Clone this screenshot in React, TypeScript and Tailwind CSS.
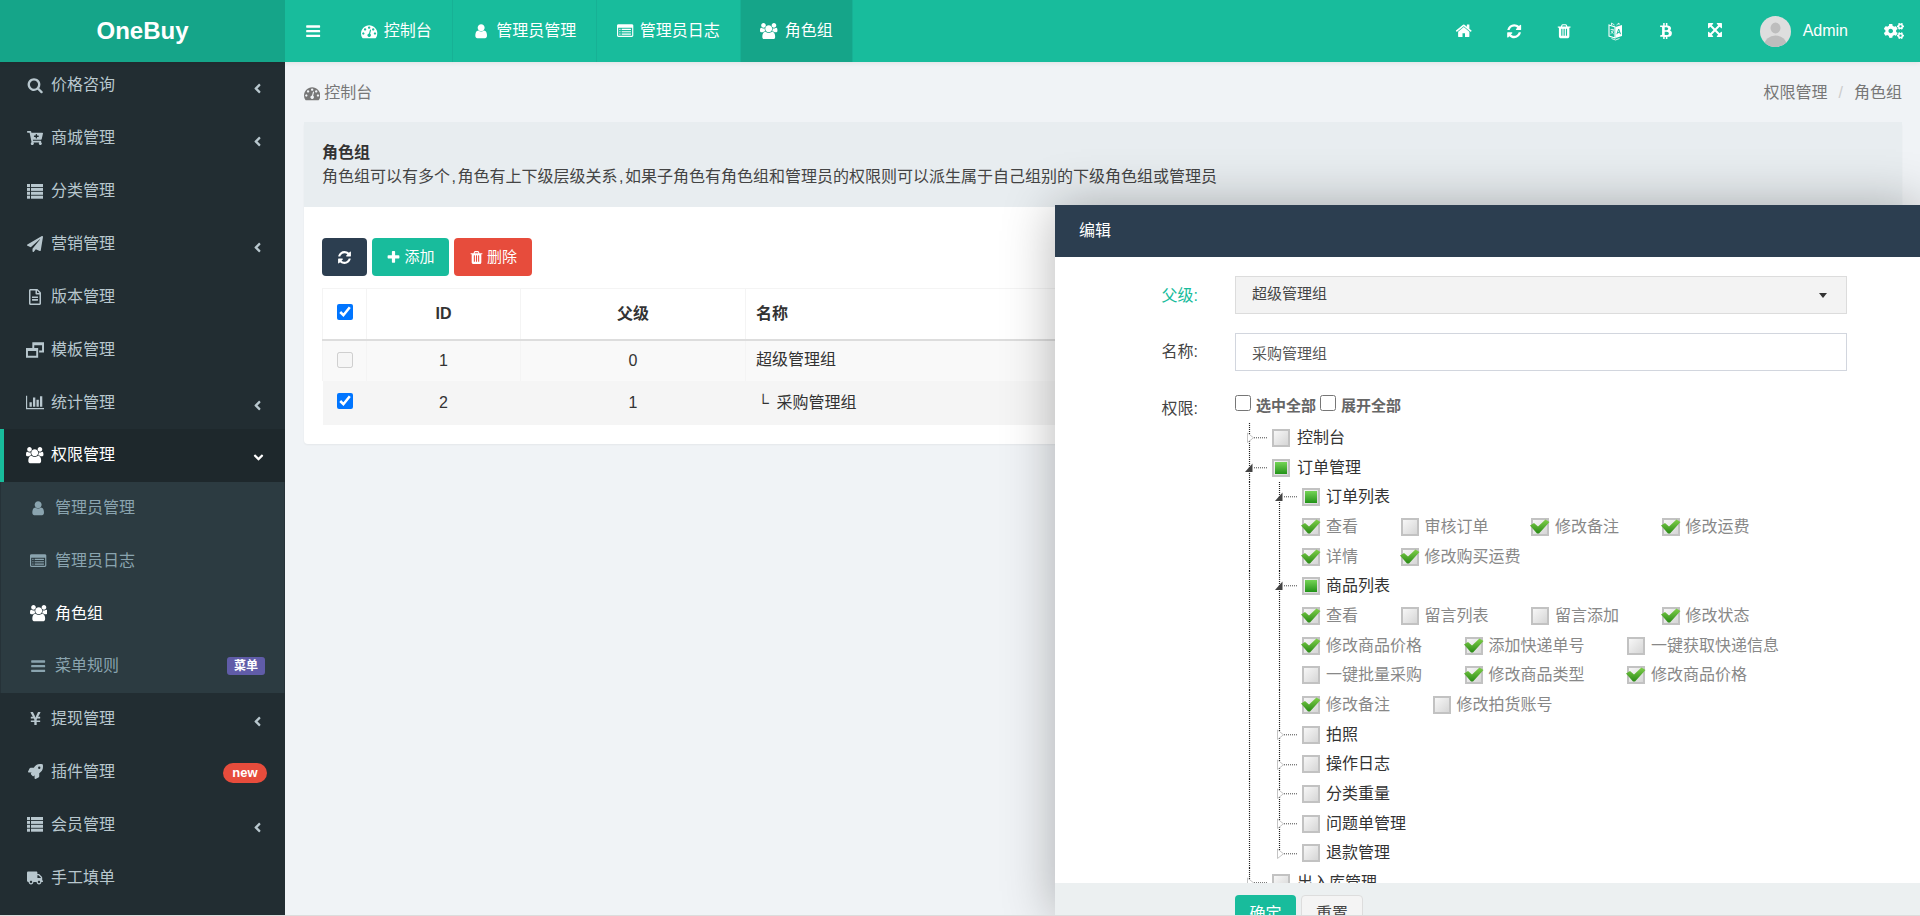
import React from "react";
import { FaBtc, FaCogs, FaCartPlus, FaPaperPlane, FaRegFileAlt, FaYenSign, FaRocket, FaTruck, FaAngleLeft, FaAngleDown } from "react-icons/fa";

type CbState = "none" | "partial" | "checked";

const D = {
  dashboard: "M384 1152q0-53-37.5-90.5t-90.5-37.5-90.5 37.5-37.5 90.5 37.5 90.5 90.5 37.5 90.5-37.5 37.5-90.5zm192-448q0-53-37.5-90.5t-90.5-37.5-90.5 37.5-37.5 90.5 37.5 90.5 90.5 37.5 90.5-37.5 37.5-90.5zm428 481l101-382q6-26-7.5-48.5t-38.5-29.5-48 6.5-30 39.5l-101 382q-60 5-107 43.5t-63 98.5q-20 77 20 146t117 89 146-20 89-117q16-60-6-117t-72-91zm660-33q0-53-37.5-90.5t-90.5-37.5-90.5 37.5-37.5 90.5 37.5 90.5 90.5 37.5 90.5-37.5 37.5-90.5zm-640-640q0-53-37.5-90.5t-90.5-37.5-90.5 37.5-37.5 90.5 37.5 90.5 90.5 37.5 90.5-37.5 37.5-90.5zm448 192q0-53-37.5-90.5t-90.5-37.5-90.5 37.5-37.5 90.5 37.5 90.5 90.5 37.5 90.5-37.5 37.5-90.5zm320 448q0 261-141 483-19 29-54 29h-1402q-35 0-54-29-141-221-141-483 0-182 71-348t191-286 286-191 348-71 348 71 286 191 191 286 71 348z",
  user: "M1536 1399q0 109-62.5 187t-150.5 78h-854q-88 0-150.5-78t-62.5-187q0-85 8.5-160.5t31.5-152 58.5-131 94-89 134.5-34.5q131 128 313 128t313-128q76 0 134.5 34.5t94 89 58.5 131 31.5 152 8.5 160.5zm-256-887q0 159-112.5 271.5t-271.5 112.5-271.5-112.5-112.5-271.5 112.5-271.5 271.5-112.5 271.5 112.5 112.5 271.5z",
  users: "M593 896q-162 5-265 128h-134q-82 0-138-40.5t-56-118.5q0-353 124-353 6 0 43.5 21t97.5 42.5 119 21.5q67 0 133-23-5 37-5 66 0 139 81 256zm1071 637q0 120-73 189.5t-194 69.5h-874q-121 0-194-69.5t-73-189.5q0-53 3.5-103.5t14-109 26.5-108.5 43-97.5 62-81 85.5-53.5 111.5-20q10 0 43 21.5t73 48 107 48 135 21.5 135-21.5 107-48 73-48 43-21.5q61 0 111.5 20t85.5 53.5 62 81 43 97.5 26.5 108.5 14 109 3.5 103.5zm-1024-1277q0 106-75 181t-181 75-181-75-75-181 75-181 181-75 181 75 75 181zm704 384q0 159-112.5 271.5t-271.5 112.5-271.5-112.5-112.5-271.5 112.5-271.5 271.5-112.5 271.5 112.5 112.5 271.5zm576 225q0 78-56 118.5t-138 40.5h-134q-103-123-265-128 81-117 81-256 0-29-5-66 66 23 133 23 59 0 119-21.5t97.5-42.5 43.5-21q124 0 124 353zm-128-609q0 106-75 181t-181 75-181-75-75-181 75-181 181-75 181 75 75 181z",
  refresh: "M1639 1056q0 5-1 7-64 268-268 434.5t-478 166.5q-146 0-282.5-55t-243.5-157l-129 129q-19 19-45 19t-45-19-19-45v-448q0-26 19-45t45-19h448q26 0 45 19t19 45-19 45l-137 137q71 66 161 102t187 36q134 0 250-65t186-179q11-17 53-117 8-23 30-23h192q13 0 22.5 9.5t9.5 22.5zm25-800v448q0 26-19 45t-45 19h-448q-26 0-45-19t-19-45 19-45l138-138q-148-137-349-137-134 0-250 65t-186 179q-11 17-53 117-8 23-30 23h-199q-13 0-22.5-9.5t-9.5-22.5v-7q65-268 270-434.5t480-166.5q146 0 284 55.5t245 156.5l130-129q19-19 45-19t45 19 19 45z",
  trash: "M704 1376v-704q0-14-9-23t-23-9h-64q-14 0-23 9t-9 23v704q0 14 9 23t23 9h64q14 0 23-9t9-23zm256 0v-704q0-14-9-23t-23-9h-64q-14 0-23 9t-9 23v704q0 14 9 23t23 9h64q14 0 23-9t9-23zm256 0v-704q0-14-9-23t-23-9h-64q-14 0-23 9t-9 23v704q0 14 9 23t23 9h64q14 0 23-9t9-23zm-544-992h448l-48-117q-7-9-17-11h-317q-10 2-17 11zm928 32v64q0 14-9 23t-23 9h-96v948q0 83-47 143.5t-113 60.5h-832q-66 0-113-58.5t-47-141.5v-952h-96q-14 0-23-9t-9-23v-64q0-14 9-23t23-9h309l70-167q15-37 54-63t79-26h320q40 0 79 26t54 63l70 167h309q14 0 23 9t9 23z",
  bars: "M1664 1344v128q0 26-19 45t-45 19h-1408q-26 0-45-19t-19-45v-128q0-26 19-45t45-19h1408q26 0 45 19t19 45zm0-512v128q0 26-19 45t-45 19h-1408q-26 0-45-19t-19-45v-128q0-26 19-45t45-19h1408q26 0 45 19t19 45zm0-512v128q0 26-19 45t-45 19h-1408q-26 0-45-19t-19-45v-128q0-26 19-45t45-19h1408q26 0 45 19t19 45z",
  home: "M1472 992v480q0 26-19 45t-45 19h-384v-384h-256v384h-384q-26 0-45-19t-19-45v-480q0-1 .5-3t.5-3l575-474 575 474q1 2 1 6zm223-69l-62 74q-8 9-21 11h-3q-13 0-21-7l-692-577-692 577q-12 8-24 7-13-2-21-11l-62-74q-8-10-7-23.5t11-21.5l719-599q32-26 76-26t76 26l244 204v-195q0-14 9-23t23-9h192q14 0 23 9t9 23v408l219 182q10 8 11 21.5t-7 23.5z",
  expand: "M1283 413l-355 355 355 355 144-144q29-31 70-14 39 17 39 59v448q0 26-19 45t-45 19h-448q-42 0-59-40-17-39 14-69l144-144-355-355-355 355 144 144q31 30 14 69-17 40-59 40h-448q-26 0-45-19t-19-45v-448q0-42 40-59 39-17 69 14l144 144 355-355-355-355-144 144q-19 19-45 19-12 0-24-5-40-17-40-59v-448q0-26 19-45t45-19h448q42 0 59 40 17 39-14 69l-144 144 355 355 355-355-144-144q-31-30-14-69 17-40 59-40h448q26 0 45 19t19 45v448q0 42-39 59-13 5-25 5-26 0-45-19z",
  search: "M1216 832q0-185-131.5-316.5t-316.5-131.5-316.5 131.5-131.5 316.5 131.5 316.5 316.5 131.5 316.5-131.5 131.5-316.5zm512 832q0 52-38 90t-90 38q-54 0-90-38l-343-342q-179 124-399 124-143 0-273.5-55.5t-225-150-150-225-55.5-273.5 55.5-273.5 150-225 225-150 273.5-55.5 273.5 55.5 225 150 150 225 55.5 273.5q0 220-124 399l343 343q37 37 37 90z",
  plus: "M1600 736v192q0 40-28 68t-68 28h-416v416q0 40-28 68t-68 28h-192q-40 0-68-28t-28-68v-416h-416q-40 0-68-28t-28-68v-192q0-40 28-68t68-28h416v-416q0-40 28-68t68-28h192q40 0 68 28t28 68v416h416q40 0 68 28t28 68z",
  listAlt: "M384 1184v64q0 13-9.5 22.5t-22.5 9.5h-64q-13 0-22.5-9.5t-9.5-22.5v-64q0-13 9.5-22.5t22.5-9.5h64q13 0 22.5 9.5t9.5 22.5zm0-256v64q0 13-9.5 22.5t-22.5 9.5h-64q-13 0-22.5-9.5t-9.5-22.5v-64q0-13 9.5-22.5t22.5-9.5h64q13 0 22.5 9.5t9.5 22.5zm0-256v64q0 13-9.5 22.5t-22.5 9.5h-64q-13 0-22.5-9.5t-9.5-22.5v-64q0-13 9.5-22.5t22.5-9.5h64q13 0 22.5 9.5t9.5 22.5zm1152 512v64q0 13-9.5 22.5t-22.5 9.5h-960q-13 0-22.5-9.5t-9.5-22.5v-64q0-13 9.5-22.5t22.5-9.5h960q13 0 22.5 9.5t9.5 22.5zm0-256v64q0 13-9.5 22.5t-22.5 9.5h-960q-13 0-22.5-9.5t-9.5-22.5v-64q0-13 9.5-22.5t22.5-9.5h960q13 0 22.5 9.5t9.5 22.5zm0-256v64q0 13-9.5 22.5t-22.5 9.5h-960q-13 0-22.5-9.5t-9.5-22.5v-64q0-13 9.5-22.5t22.5-9.5h960q13 0 22.5 9.5t9.5 22.5zm128 704v-832q0-13-9.5-22.5t-22.5-9.5h-1472q-13 0-22.5 9.5t-9.5 22.5v832q0 13 9.5 22.5t22.5 9.5h1472q13 0 22.5-9.5t9.5-22.5zm128-1088v1088q0 66-47 113t-113 47h-1472q-66 0-113-47t-47-113v-1088q0-66 47-113t113-47h1472q66 0 113 47t47 113z",
  bar: "M640 896v512h-256v-512h256zm384-512v1024h-256v-1024h256zm1024 1152v128h-2048v-1472h128v1344h1920zm-640-896v768h-256v-768h256zm384-384v1152h-256v-1152h256z",
};

function Fa({ d, w = 1792, s = 16.3 }: { d: string; w?: number; s?: number }) {
  const k = s / 1792;
  return (
    <svg width={w * k} height={s} viewBox={`0 0 ${w} 1792`} fill="currentColor" className="shrink-0">
      <path d={d} />
    </svg>
  );
}

const Dash = (p: { s?: number }) => <Fa d={D.dashboard} s={p.s} />;
const UserI = (p: { s?: number }) => <Fa d={D.user} s={p.s} />;
const UsersI = () => <Fa d={D.users} w={1920} />;
const ListAlt = () => <Fa d={D.listAlt} />;
const BarsI = () => <Fa d={D.bars} />;

function ListI() {
  return (
    <svg width="16.5" height="15" viewBox="0 0 16.5 15" fill="currentColor">
      {[0, 3.9, 7.8, 11.7].map((y) => (
        <g key={y}>
          <rect x="0" y={y} width="3" height="3" />
          <rect x="4" y={y} width="12.5" height="3" />
        </g>
      ))}
    </svg>
  );
}

function CloneI() {
  return (
    <svg width="18.5" height="16" viewBox="0 0 18.5 16" fill="currentColor">
      <path fillRule="evenodd" d="M6.5 0h12v10.5h-5V8.5h3V3h-8v3h-2z" />
      <path fillRule="evenodd" d="M0 6h12.5v10H0z M2 9v5h8.5V9z" />
    </svg>
  );
}

function LangIcon() {
  return (
    <svg width="15" height="19" viewBox="0 0 15 19" fill="none">
      <path d="M1 3 L7 5 V16 L1 14 Z" stroke="#fff" strokeWidth="1.1" />
      <path d="M7.5 5 L14 3 V14 L7.5 16 Z" fill="#fff" />
      <path d="M2.6 7.6 H5.6 M4.1 6.8 V7.6 M5.4 7.6 C5 10 3.7 11.2 2.6 11.8 M3.4 9 C3.8 10.4 4.6 11.2 5.6 11.8" stroke="#fff" strokeWidth="0.8" />
      <path d="M8.9 12.2 L10.7 7 L12.5 12.2 M9.6 10.6 H11.8" stroke="#18bc9c" strokeWidth="1" />
      <path d="M3.5 16.5 L7.5 18 L11.5 16.5" stroke="#fff" strokeWidth="0.8" />
      <path d="M3.5 3 L3.5 1 L6.5 3 M11 3 L11 1 L8.5 3" stroke="#fff" strokeWidth="0.8" />
    </svg>
  );
}

function Avatar() {
  return (
    <svg width="31" height="31" viewBox="0 0 31 31" className="shrink-0">
      <clipPath id="avatar-clip"><circle cx="15.5" cy="15.5" r="15.5" /></clipPath>
      <g clipPath="url(#avatar-clip)">
        <rect width="31" height="31" fill="#dedede" />
        <ellipse cx="15.5" cy="12" rx="5" ry="5.4" fill="#bdbdbd" />
        <ellipse cx="15.5" cy="29" rx="11" ry="9.5" fill="#bdbdbd" />
      </g>
    </svg>
  );
}

const tabs = [
  { icon: <Dash />, label: "控制台", w: "w-[112px]", gap: "gap-[6px]" },
  { icon: <UserI />, label: "管理员管理", w: "w-[144px]", gap: "gap-[7px]" },
  { icon: <ListAlt />, label: "管理员日志", w: "w-[144px]", gap: "gap-[6px]" },
  { icon: <UsersI />, label: "角色组", w: "w-[112px]", gap: "gap-[7px]", active: true },
];

function Header() {
  return (
    <header className="flex h-[62px] shrink-0 bg-[#18bc9c] text-white text-[16px] shadow-[0_1px_5px_rgba(0,0,0,0.08)] relative z-10">
      <div className="flex w-[285px] items-center justify-center bg-[#15a589] text-[24px] font-bold">OneBuy</div>
      <div className="flex w-[56px] items-center justify-center"><BarsI /></div>
      {tabs.map((t) => (
        <div key={t.label} className={`${t.w} ${t.gap} flex items-center justify-center border-r border-[#17b195] ${t.active ? "bg-[#15a589]" : ""}`}>
          {t.icon}
          <span>{t.label}</span>
        </div>
      ))}
      <div className="ml-auto flex items-center">
        {[<Fa d={D.home} s={17.5} key="a" />, <Fa d={D.refresh} key="b" />, <Fa d={D.trash} key="c" />, <LangIcon key="d" />, <FaBtc size={16} key="e" />, <Fa d={D.expand} key="f" />].map((ic, i) => (
          <div key={i} className="flex w-[50.6px] justify-center">{ic}</div>
        ))}
        <div className="ml-[18px]"><Avatar /></div>
        <span className="ml-[12px]">Admin</span>
        <div className="ml-[36px] mr-[16px]"><FaCogs size={20} /></div>
      </div>
    </header>
  );
}

type Item = { icon: React.ReactNode; label: string; chev?: boolean; badge?: "new" };
const topItems: Item[] = [
  { icon: <Fa d={D.search} />, label: "价格咨询", chev: true },
  { icon: <FaCartPlus size={16} />, label: "商城管理", chev: true },
  { icon: <ListI />, label: "分类管理" },
  { icon: <FaPaperPlane size={16} />, label: "营销管理", chev: true },
  { icon: <FaRegFileAlt size={16} />, label: "版本管理" },
  { icon: <CloneI />, label: "模板管理" },
  { icon: <Fa d={D.bar} w={2048} />, label: "统计管理", chev: true },
];
const bottomItems: Item[] = [
  { icon: <FaYenSign size={15} />, label: "提现管理", chev: true },
  { icon: <FaRocket size={15} />, label: "插件管理", badge: "new" },
  { icon: <ListI />, label: "会员管理", chev: true },
  { icon: <FaTruck size={16} />, label: "手工填单" },
];

function SideRow({ item }: { item: Item }) {
  return (
    <div className="flex h-[52.86px] items-center border-l-4 border-transparent pl-[22px] text-[#b8c7ce]">
      <span className="flex w-[18px] justify-center">{item.icon}</span>
      <span className="ml-[7px]">{item.label}</span>
      {item.chev && <FaAngleLeft size={15} className="ml-auto mr-[20px] mt-[6px] text-[#b8c7ce]" />}
      {item.badge && (
        <span className="ml-auto mr-[18px] mt-[2px] flex h-[20px] w-[44px] items-center justify-center rounded-full bg-[#e74c3c] text-[13px] font-bold text-white">new</span>
      )}
    </div>
  );
}

function SubRow({ icon, label, active, badge }: { icon: React.ReactNode; label: string; active?: boolean; badge?: string }) {
  return (
    <div className={`flex h-[52.67px] items-center pl-[29px] ${active ? "text-white" : "text-[#8aa4af]"}`}>
      <span className="flex w-[17px] justify-center">{icon}</span>
      <span className="ml-[8px]">{label}</span>
      {badge && (
        <span className="ml-auto mr-[19px] flex h-[18px] w-[38px] items-center justify-center rounded-[3px] bg-[#605ca8] text-[12px] font-bold text-white">{badge}</span>
      )}
    </div>
  );
}

function Sidebar() {
  return (
    <aside className="w-[285px] shrink-0 overflow-hidden bg-[#222d32] text-[16px]">
      <div className="mt-[-3px]">
        {topItems.map((it) => <SideRow key={it.label} item={it} />)}
        <div className="flex h-[52.86px] items-center border-l-4 border-[#18bc9c] bg-[#1e282c] pl-[22px] text-white">
          <span className="flex w-[18px] justify-center"><UsersI /></span>
          <span className="ml-[7px]">权限管理</span>
          <FaAngleDown size={15} className="ml-auto mr-[19px] mt-[4px]" />
        </div>
        <div className="border-x border-[#263238] bg-[#2c3b41]">
          <SubRow icon={<UserI />} label="管理员管理" />
          <SubRow icon={<ListAlt />} label="管理员日志" />
          <SubRow icon={<UsersI />} label="角色组" active />
          <SubRow icon={<BarsI />} label="菜单规则" badge="菜单" />
        </div>
        {bottomItems.map((it) => <SideRow key={it.label} item={it} />)}
      </div>
    </aside>
  );
}

const descParts = ["角色组可以有多个", "角色有上下级层级关系", "如果子角色有角色组和管理员的权限则可以派生属于自己组别的下级角色组或管理员"];

function Content() {
  return (
    <main className="flex-1 overflow-hidden bg-[#f0f3f6] pl-[19px] pr-[18px] text-[16px] text-[#333]">
      <div className="flex h-[60px] items-center justify-between pt-[2px] text-[#777]">
        <div className="flex items-center gap-[4px]"><Dash /><span>控制台</span></div>
        <div className="flex items-center">
          <span>权限管理</span><span className="mx-[11px] text-[#ccc]">/</span><span>角色组</span>
        </div>
      </div>
      <section className="rounded-[4px] bg-white shadow-[0_1px_2px_rgba(0,0,0,0.05)]">
        <div className="flex h-[85px] flex-col justify-center bg-[#e8edf0] px-[18px] leading-[24px]">
          <div className="font-bold">角色组</div>
          <div className="text-[#444]">
            {descParts.map((p, i) => (
              <React.Fragment key={p}>
                {i > 0 && <span className="mx-[1.5px]">,</span>}
                {p}
              </React.Fragment>
            ))}
          </div>
        </div>
        <div className="px-[18px] pb-[19px] pt-[31px]">
          <div className="flex gap-[5px] text-[15px] text-white">
            <button className="flex h-[38px] w-[45px] items-center justify-center rounded-[4px] bg-[#2c3e50]"><Fa d={D.refresh} s={15} /></button>
            <button className="flex h-[38px] w-[77px] items-center justify-center gap-[3px] rounded-[4px] bg-[#18bc9c]"><Fa d={D.plus} s={15} />添加</button>
            <button className="flex h-[38px] w-[78px] items-center justify-center gap-[3px] rounded-[4px] bg-[#e74c3c]"><Fa d={D.trash} s={15} />删除</button>
          </div>
          <table className="mt-[12px] w-full table-fixed border-collapse">
            <colgroup>
              <col className="w-[44px]" /><col className="w-[154px]" /><col className="w-[225px]" /><col />
            </colgroup>
            <thead>
              <tr className="h-[51px] border-b-2 border-[#ddd]">
                <th className="border border-b-2 border-[#f4f4f4] border-b-[#ddd]"><input type="checkbox" defaultChecked className="block h-4 w-4 mx-auto -mt-[3px]" /></th>
                <th className="border border-b-2 border-[#f4f4f4] border-b-[#ddd]">ID</th>
                <th className="border border-b-2 border-[#f4f4f4] border-b-[#ddd]">父级</th>
                <th className="border border-b-2 border-[#f4f4f4] border-b-[#ddd] px-[10px] text-left">名称</th>
              </tr>
            </thead>
            <tbody>
              <tr className="h-[41px] bg-[#f9f9f9]">
                <td className="border-x border-[#f4f4f4]"><input type="checkbox" disabled className="block h-4 w-4 mx-auto -mt-[2px]" /></td>
                <td className="border-x border-[#f4f4f4] text-center">1</td>
                <td className="border-x border-[#f4f4f4] text-center">0</td>
                <td className="border-x border-[#f4f4f4] px-[10px]"><span className="-mt-[2px] block">超级管理组</span></td>
              </tr>
              <tr className="h-[44px] bg-[#f5f5f5]">
                <td><input type="checkbox" defaultChecked className="block h-4 w-4 mx-auto -mt-[3px]" /></td>
                <td className="text-center">2</td>
                <td className="text-center">1</td>
                <td className="pl-[12px]"><span className="inline-block w-[19px]">└</span>采购管理组</td>
              </tr>
            </tbody>
          </table>
        </div>
      </section>
    </main>
  );
}

function TreeCb({ state }: { state: CbState }) {
  return (
    <span className="relative h-[18px] w-[18px] shrink-0 border-2 border-[#c2c2c2] bg-gradient-to-br from-[#f7f7f7] to-[#d6d6d6]">
      {state === "partial" && (
        <span className="absolute left-[1px] top-[1px] h-[12px] w-[12px] bg-gradient-to-b from-[#74d456] to-[#1f9316]" />
      )}
      {state === "checked" && (
        <svg width="20" height="16" viewBox="0 0 20 16" className="absolute -left-[3px] top-[-1px]">
          <defs>
            <linearGradient id="chk" x1="0" y1="0" x2="0" y2="1">
              <stop offset="0" stopColor="#80d04a" /><stop offset="1" stopColor="#2a8a16" />
            </linearGradient>
          </defs>
          <path d="M0 6.5 L4 4 L8 7.5 L15.5 0.5 L19.5 3 L9 14.5 L7 14.5 Z" fill="url(#chk)" />
        </svg>
      )}
    </span>
  );
}

type Conn = "open" | "closed";

function Link({ width, conn, end }: { width: number; conn?: Conn; end?: boolean }) {
  return (
    <svg width={width} height="29.7" viewBox={`0 0 ${width} 29.7`} className="shrink-0 overflow-visible">
      <line x1="0.5" y1="0" x2="0.5" y2={end ? 15 : 29.7} stroke="#222" strokeWidth="1.2" strokeDasharray="1 1" />
      {conn && <line x1="5" y1="14.8" x2="19" y2="14.8" stroke="#444" strokeWidth="1" strokeDasharray="1 1" />}
      {conn === "closed" && <path d="M-1.5 10 L4.5 14.8 L-1.5 19.5 Z" fill="#fff" stroke="#c4c4c4" strokeWidth="1" />}
      {conn === "open" && <path d="M-4 19 L3.5 19 L3.5 10.5 Z" fill="#444" />}
    </svg>
  );
}

function Node1({ label, state, conn }: { label: string; state: CbState; conn: Conn }) {
  return (
    <div className="flex h-[29.7px] items-center">
      <Link width={23} conn={conn} />
      <TreeCb state={state} />
      <span className="ml-[7px] text-[#333]">{label}</span>
    </div>
  );
}

function Node2({ label, state, conn, end }: { label: string; state: CbState; conn: Conn; end?: boolean }) {
  return (
    <div className="flex h-[29.7px] items-center">
      <Link width={30} />
      <Link width={23} conn={conn} end={end} />
      <TreeCb state={state} />
      <span className="ml-[6px] text-[#333]">{label}</span>
    </div>
  );
}

function Leaves({ items }: { items: [string, CbState][] }) {
  return (
    <div className="flex h-[29.7px] items-center">
      <Link width={30} />
      <Link width={23} />
      <div className="flex gap-[42.5px]">
        {items.map(([l, s]) => (
          <div key={l} className="flex items-center gap-[6px]">
            <TreeCb state={s} />
            <span className="text-[#888]">{l}</span>
          </div>
        ))}
      </div>
    </div>
  );
}

function Dialog() {
  const labelCls = "w-[143px] text-right";
  return (
    <div className="absolute bottom-0 left-[1055px] right-0 top-[205px] flex flex-col overflow-hidden bg-white text-[16px] shadow-[1px_1px_50px_rgba(0,0,0,0.3)]">
      <div className="flex h-[52px] shrink-0 items-center bg-[#2c3e50] pl-[24px] text-white">编辑</div>
      <div className="flex-1 overflow-hidden pt-[19px] text-[#444]">
        <div className="flex h-[38px] items-center">
          <label className={`${labelCls} pt-[2px] text-[#18bc9c]`}>父级:</label>
          <div className="ml-[37px] flex h-[38px] w-[612px] items-center justify-between border border-[#dcdcdc] bg-[#f3f3f3] pl-[16px] pr-[19px] text-[15px] text-[#444]">
            <span className="-mt-[2px]">超级管理组</span>
            <span className="h-0 w-0 border-x-4 border-t-[5px] border-x-transparent border-t-[#333]" />
          </div>
        </div>
        <div className="mt-[19px] flex h-[38px] items-center">
          <label className={labelCls}>名称:</label>
          <input readOnly value="采购管理组" className="ml-[37px] h-[38px] w-[612px] border border-[#d2d6de] bg-white pl-[16px] text-[15px] text-[#555] outline-none" />
        </div>
        <div className="mt-[24px] flex items-start">
          <label className={`${labelCls} leading-[28px]`}>权限:</label>
          <div className="ml-[37px] w-[612px]">
            <div className="flex h-[16px] items-center text-[15px] font-bold text-[#666]">
              <input type="checkbox" className="h-4 w-4" />
              <span className="ml-[5px] mt-[6px]">选中全部</span>
              <input type="checkbox" className="ml-[4px] h-4 w-4" />
              <span className="ml-[5px] mt-[6px]">展开全部</span>
            </div>
            <div className="ml-[14px] mt-[12px]">
              <Node1 label="控制台" state="none" conn="closed" />
              <Node1 label="订单管理" state="partial" conn="open" />
              <Node2 label="订单列表" state="partial" conn="open" />
              <Leaves items={[["查看", "checked"], ["审核订单", "none"], ["修改备注", "checked"], ["修改运费", "checked"]]} />
              <Leaves items={[["详情", "checked"], ["修改购买运费", "checked"]]} />
              <Node2 label="商品列表" state="partial" conn="open" />
              <Leaves items={[["查看", "checked"], ["留言列表", "none"], ["留言添加", "none"], ["修改状态", "checked"]]} />
              <Leaves items={[["修改商品价格", "checked"], ["添加快递单号", "checked"], ["一键获取快递信息", "none"]]} />
              <Leaves items={[["一键批量采购", "none"], ["修改商品类型", "checked"], ["修改商品价格", "checked"]]} />
              <Leaves items={[["修改备注", "checked"], ["修改拍货账号", "none"]]} />
              <Node2 label="拍照" state="none" conn="closed" />
              <Node2 label="操作日志" state="none" conn="closed" />
              <Node2 label="分类重量" state="none" conn="closed" />
              <Node2 label="问题单管理" state="none" conn="closed" />
              <Node2 label="退款管理" state="none" conn="closed" end />
              <Node1 label="出入库管理" state="none" conn="closed" />
            </div>
          </div>
        </div>
      </div>
      <div className="flex h-[32px] shrink-0 gap-[5px] overflow-hidden bg-[#ecf0f1] pl-[180px] pt-[12px]">
        <button className="h-[38px] w-[61px] shrink-0 rounded-[4px] bg-[#18bc9c] text-white">确定</button>
        <button className="h-[38px] w-[62px] shrink-0 rounded-[4px] border border-[#ddd] bg-[#f4f4f4] text-[#444]">重置</button>
      </div>
    </div>
  );
}

export default function App() {
  return (
    <div className="flex h-screen w-full flex-col overflow-hidden font-['Liberation_Sans','Noto_Sans_CJK_SC',sans-serif]">
      <div className="relative flex min-h-0 flex-1 flex-col overflow-hidden">
        <Header />
        <div className="flex min-h-0 flex-1">
          <Sidebar />
          <Content />
        </div>
        <Dialog />
      </div>
      <div className="h-px shrink-0 bg-[#dcdcdc]" />
    </div>
  );
}
